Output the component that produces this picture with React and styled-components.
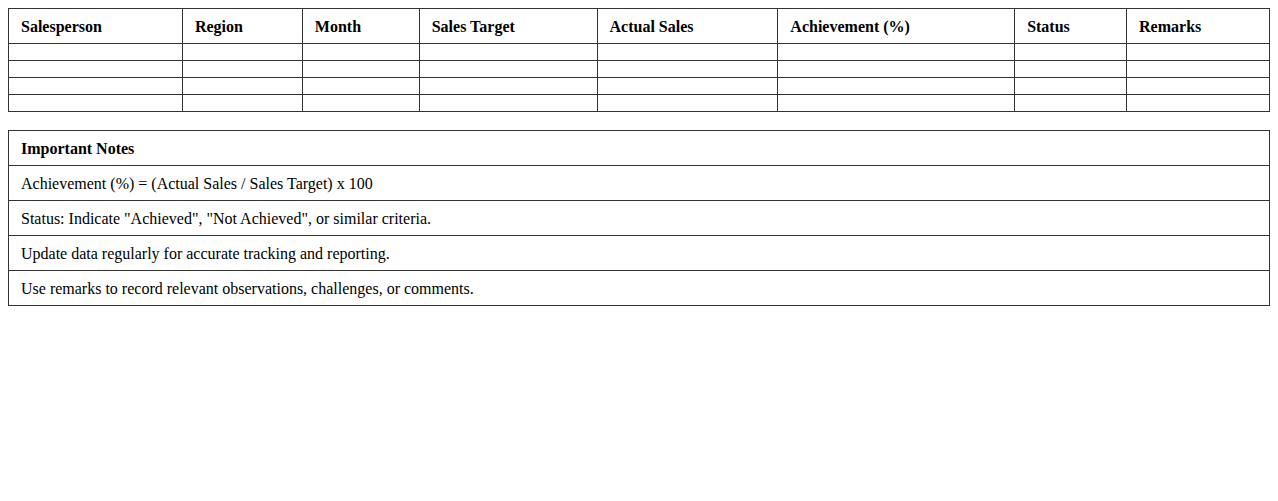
import React from "react";
import styled, { createGlobalStyle } from "styled-components";

const Global = createGlobalStyle`
  body {
    margin: 8px;
    background: #fff;
    font-family: "Liberation Serif", "Times New Roman", serif;
    font-size: 16px;
    color: #000;
  }
`;

const Table = styled.table`
  width: 100%;
  border-collapse: collapse;
  margin-bottom: ${(p) => p.$gap || 0}px;
`;

const Th = styled.th`
  border: 1px solid #333;
  padding: 9px 12px 7px;
  text-align: left;
  font-weight: bold;
  height: 18px;
  line-height: 18px;
`;

const Td = styled.td`
  border: 1px solid #333;
  padding: ${(p) => (p.$empty ? "8px 12px" : "9px 12px 7px")};
  height: ${(p) => (p.$empty ? 0 : 18)}px;
  line-height: ${(p) => (p.$empty ? 0 : 18)}px;
  font-weight: ${(p) => (p.$bold ? "bold" : "normal")};
`;

const columns = [
  ["Salesperson", 174],
  ["Region", 120],
  ["Month", 117],
  ["Sales Target", 178],
  ["Actual Sales", 181],
  ["Achievement (%)", 237],
  ["Status", 112],
  ["Remarks", 143],
];

const notes = [
  "Achievement (%) = (Actual Sales / Sales Target) x 100",
  'Status: Indicate "Achieved", "Not Achieved", or similar criteria.',
  "Update data regularly for accurate tracking and reporting.",
  "Use remarks to record relevant observations, challenges, or comments.",
];

export default function App() {
  return (
    <>
      <Global />
      <Table $gap={18}>
        <colgroup>
          {columns.map(([n, w]) => (
            <col key={n} style={{ width: w }} />
          ))}
        </colgroup>
        <thead>
          <tr>
            {columns.map(([n]) => (
              <Th key={n}>{n}</Th>
            ))}
          </tr>
        </thead>
        <tbody>
          {[0, 1, 2, 3].map((r) => (
            <tr key={r}>
              {columns.map(([n]) => (
                <Td key={n} $empty />
              ))}
            </tr>
          ))}
        </tbody>
      </Table>
      <Table>
        <tbody>
          <tr>
            <Td $bold>Important Notes</Td>
          </tr>
          {notes.map((n) => (
            <tr key={n}>
              <Td>{n}</Td>
            </tr>
          ))}
        </tbody>
      </Table>
    </>
  );
}
